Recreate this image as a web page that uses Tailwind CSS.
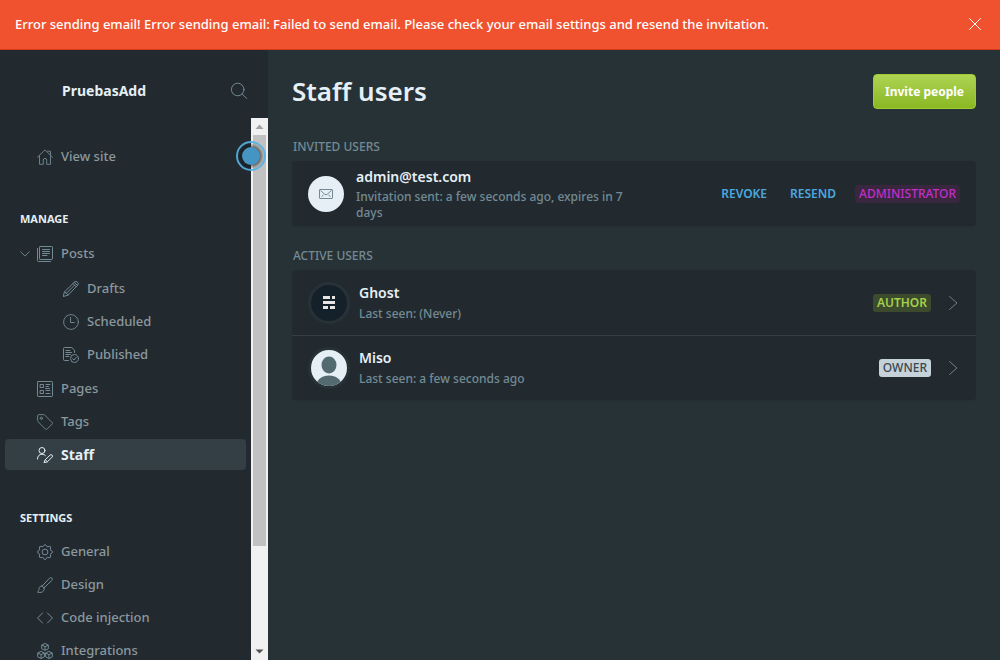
<!DOCTYPE html>
<html lang="en">
<head>
<meta charset="utf-8">
<meta name="viewport" content="width=device-width, initial-scale=1">
<title>Staff users - PruebasAdd</title>
<script src="https://cdn.jsdelivr.net/npm/@tailwindcss/browser@4"></script>
</head>
<body class="flex h-screen flex-col overflow-hidden bg-[#273237] font-['Noto_Sans','Open_Sans',sans-serif] text-[13px] text-[#8b989e]">

<aside role="alert" class="flex h-[50px] shrink-0 items-center justify-between border-b border-[#d4371a] bg-[#f05230] pr-[18px] pl-[15px] text-white">
  <p class="text-[13px] font-medium">Error sending email! Error sending email: Failed to send email. Please check your email settings and resend the invitation.</p>
  <button type="button" aria-label="Close" class="mb-px">
    <svg class="size-[14px]" viewBox="0 0 14 14" fill="none" stroke="currentColor" stroke-linecap="round"><path d="M1.5 1.5l11 11M12.5 1.5l-11 11"/></svg>
  </button>
</aside>

<div class="flex min-h-0 flex-1">
  <nav aria-label="Main" class="relative flex w-[268px] shrink-0 flex-col bg-[#222a30] font-medium">
    <header class="flex h-[68px] shrink-0 items-center justify-between pt-3 pr-5 pl-[62px]">
      <span class="text-[14px] font-bold text-[#e5eff5]">PruebasAdd</span>
      <button type="button" aria-label="Search" class="pt-0.5 text-[#738a94]">
        <svg class="size-[18px]" viewBox="0 0 18 18" fill="none" stroke="currentColor" stroke-linecap="round"><circle cx="7.7" cy="7.5" r="6.3"/><path d="M12.2 12l4.5 4.5"/></svg>
      </button>
    </header>

    <div class="flex min-h-0 flex-1">
      <div class="min-w-0 flex-1 overflow-hidden px-[5px] pt-[23px]">
        <a href="#site" class="flex h-[31px] items-center gap-2 pl-8">
          <svg class="size-4 text-[#738a94]" viewBox="0 0 16 16" fill="none" stroke="currentColor" stroke-width="0.9" stroke-linecap="round" stroke-linejoin="round"><path d="M.5 8.2L8 .9l7.500 7.300M2.500 7v8.300h3.800v-4.200a1.700 1.700 0 0 1 3.400 0v4.200h3.800V7M10.700 2.200h2.800v3.400"/></svg>
          View site</a>

        <h2 class="mt-[37px] h-5 pl-[15px] text-[11px] leading-5 font-bold text-[#e5eff5]">MANAGE</h2>
        <ul class="mt-[9px]">
          <li>
            <div class="flex h-[31px] items-center pl-[15px]">
              <button type="button" aria-label="Collapse posts" class="mr-[7px] text-[#738a94]"><svg class="h-[6px] w-[10px]" viewBox="0 0 10 6" fill="none" stroke="currentColor" stroke-width="0.9" stroke-linecap="round" stroke-linejoin="round"><path d="M.7.7L5 5.100 9.300.7"/></svg></button>
              <a href="#posts" class="flex items-center gap-2">
                <svg class="size-4 text-[#738a94]" viewBox="0 0 16 16" fill="none" stroke="currentColor" stroke-linecap="round" stroke-linejoin="round"><rect x="2.500" y=".5" width="13" height="13" rx=".7"/><path d="M.5 2.500v12a1 1 0 0 0 1 1h12M5.500 3.500h7M5.500 5.500h7M5.500 7.500h7M5.500 9.500h4.500"/></svg>
                Posts</a>
            </div>
            <ul class="mt-1 flex flex-col gap-0.5">
              <li><a href="#drafts" class="flex h-[31px] items-center gap-2 pl-[58px]">
                <svg class="size-4 text-[#738a94]" viewBox="0 0 16 16" fill="none" stroke="currentColor" stroke-linecap="round" stroke-linejoin="round"><path d="M1.700 10.700L11.300 1.200a2.200 2.200 0 0 1 3.200 0 2.200 2.200 0 0 1 0 3.200L5.200 14 .5 15.500zM1.700 10.700L5.200 14M10 2.500L13.300 5.800M11.200 1.300l3.300 3.200M3.500 12.200l8-8"/></svg>
                Drafts</a></li>
              <li><a href="#scheduled" class="flex h-[31px] items-center gap-2 pl-[58px]">
                <svg class="size-4 text-[#738a94]" viewBox="0 0 16 16" fill="none" stroke="currentColor" stroke-width="0.9" stroke-linecap="round" stroke-linejoin="round"><circle cx="8" cy="8" r="7.400"/><path d="M7.500 3.500v5h3.800"/></svg>
                Scheduled</a></li>
              <li><a href="#published" class="flex h-[31px] items-center gap-2 pl-[58px]">
                <svg class="size-4 text-[#738a94]" viewBox="0 0 16 16" fill="none" stroke="currentColor" stroke-linecap="round" stroke-linejoin="round"><path d="M5.500 13.500h-4a1 1 0 0 1-1-1v-11a1 1 0 0 1 1-1H8.800l2.700 2.700v2.300M2.800 3.500h4M2.800 5.500h5.700M2.800 7.500h4.500M2.800 9.500h3"/><circle cx="11.500" cy="11.500" r="4"/><path d="M9.700 11.700l1.300 1.300 2.300-2.800"/></svg>
                Published</a></li>
            </ul>
          </li>
        </ul>
        <ul class="mt-[3px] flex flex-col gap-0.5">
          <li><a href="#pages" class="flex h-[31px] items-center gap-2 pl-8">
            <svg class="size-4 text-[#738a94]" viewBox="0 0 16 16" fill="none" stroke="currentColor" stroke-linecap="round" stroke-linejoin="round"><rect x=".5" y=".5" width="15" height="15" rx=".7"/><path d="M3.500 3.500h3v3h-3zM3.500 9.500h3v3h-3zM9 3.500h4M9 5.500h2.500M9 9.500h4M9 12.500h4M8.500 7.500h4"/></svg>
            Pages</a></li>
          <li><a href="#tags" class="flex h-[31px] items-center gap-2 pl-8">
            <svg class="size-4 text-[#738a94]" viewBox="0 0 16 16" fill="none" stroke="currentColor" stroke-width="0.9" stroke-linecap="round" stroke-linejoin="round"><path d="M.6 1.600a1 1 0 0 1 1-1h5.200a1 1 0 0 1 .7.300l7.700 7.700a1 1 0 0 1 0 1.400l-5.200 5.200a1 1 0 0 1-1.400 0L.9 7.500a1 1 0 0 1-.3-.7z"/><circle cx="4.300" cy="4.300" r="1.100"/></svg>
            Tags</a></li>
          <li><a href="#staff" aria-current="page" class="flex h-[31px] items-center gap-2 rounded-[4px] bg-[#343f45] pl-8 text-[14px] font-bold text-[#e5eff5]">
            <svg class="size-4" viewBox="0 0 16 16" fill="none" stroke="currentColor" stroke-linecap="round" stroke-linejoin="round"><circle cx="5" cy="3.500" r="3"/><path d="M.5 12c0-3 1.800-4.800 4.500-4.800 1.500 0 2.600.5 3.400 1.400M8.300 12.700l4.800-4.600a1.400 1.400 0 0 1 2 0 1.400 1.400 0 0 1 0 2l-4.700 4.700-3 .8zM8.300 12.700l2.100 2.100"/></svg>
            Staff</a></li>
        </ul>

        <h2 class="mt-[38px] h-5 pl-[15px] text-[11px] leading-5 font-bold text-[#e5eff5]">SETTINGS</h2>
        <ul class="mt-2 flex flex-col gap-0.5">
          <li><a href="#general" class="flex h-[31px] items-center gap-2 pl-8">
            <svg class="size-4 text-[#738a94]" viewBox="0 0 16 16" fill="none" stroke="currentColor" stroke-linejoin="round"><path d="M6.600 1.500Q8-.2 9.400 1.500L9.900 2.600 11 2.900 12.200 2.300Q14 2.200 13.700 4L13.200 5.100 13.700 6.300 14.800 6.700Q16.200 8 14.800 9.300L13.700 9.700 13.200 10.900 13.700 12Q14 13.900 12 13.700L10.900 13.200 9.700 13.700 9.300 14.800Q8 16.200 6.700 14.800L6.300 13.700 5.100 13.200 4 13.700Q2 13.900 2.300 12L2.800 10.900 2.300 9.700 1.200 9.300Q-.2 8 1.200 6.700L2.300 6.300 2.800 5.100 2.300 4Q2 2.200 4 2.300L5.100 2.800 6.200 2.400Z"/><circle cx="8" cy="8" r="2.900"/></svg>
            General</a></li>
          <li><a href="#design" class="flex h-[31px] items-center gap-2 pl-8">
            <svg class="size-4 text-[#738a94]" viewBox="0 0 16 16" fill="none" stroke="currentColor" stroke-linecap="round" stroke-linejoin="round"><path d="M5.200 9L12.600 1.100a1.600 1.600 0 0 1 2.300 0 1.600 1.600 0 0 1 0 2.300L7 10.900M5.200 9L7 10.900M5.200 9c-1.600-.2-2.900.7-3.100 2.300-.2 1.800-.5 2.900-1.600 3.900 2.300.7 5.100.2 6.100-1.400.7-1 .8-2 .4-2.900"/></svg>
            Design</a></li>
          <li><a href="#code" class="flex h-[31px] items-center gap-2 pl-8">
            <svg class="size-4 text-[#738a94]" viewBox="0 0 16 16" fill="none" stroke="currentColor" stroke-linecap="round" stroke-linejoin="round"><path d="M5.500 3L.6 8l4.900 5M10.500 3l4.900 5-4.900 5"/></svg>
            Code injection</a></li>
          <li><a href="#integrations" class="flex h-[31px] items-center gap-2 pl-8">
            <svg class="size-4 text-[#738a94]" viewBox="0 0 16 16" fill="none" stroke="currentColor" stroke-linejoin="round"><path d="M8 .5l3.300 1.600v3.700L8 7.400 4.700 5.800V2.100zM4.700 2.100L8 3.700l3.300-1.600M8 3.700v3.700M4.100 8.400l3.300 1.600v3.800l-3.300 1.700L.7 13.800V10zM.7 10l3.400 1.600L7.400 10M4.100 11.600v3.900M11.900 8.400l3.400 1.600v3.800l-3.400 1.700-3.300-1.700V10zM8.600 10l3.300 1.600 3.400-1.600M11.900 11.600v3.900"/></svg>
            Integrations</a></li>
        </ul>
      </div>

      <div aria-hidden="true" class="flex w-[17px] shrink-0 flex-col items-center bg-[#f1f1f1]">
        <svg class="size-[17px] shrink-0" viewBox="0 0 17 17" fill="#a3a3a3"><path d="M8.500 6.500L12.500 11h-8z"/></svg>
        <div class="flex w-full flex-1 flex-col px-0.5"><div class="h-[81%] bg-[#c1c1c1]"></div></div>
        <svg class="size-[17px] shrink-0" viewBox="0 0 17 17" fill="#505050"><path d="M8.500 10.500L4.500 6.500h8z"/></svg>
      </div>
    </div>
    <button type="button" aria-label="Show hint" class="absolute top-[91px] right-0.5 grid size-[30px] place-items-center rounded-full border-2 border-[#55b1e4]/90 bg-[radial-gradient(circle,rgba(20,20,20,0.6)_45%,rgba(20,20,20,0.05)_70%)]"><span class="size-[18px] rounded-full bg-[#4595c3]"></span></button>
  </nav>

  <main class="min-w-0 flex-1 px-6 pt-6">
    <header class="flex h-[35px] items-center justify-between">
      <h1 class="text-[26px] font-semibold text-[#e5eff5]">Staff users</h1>
      <button type="button" class="h-[35px] rounded-[4px] border border-[#9fcb33] bg-linear-to-b from-[#aed451] to-[#8bb722] px-[11px] text-[12px] font-bold text-white">Invite people</button>
    </header>

    <section class="mt-7">
      <h2 class="pl-px text-[12px] leading-5 font-medium text-[#738a94]">INVITED USERS</h2>
      <article class="mt-1 flex h-[65px] items-center justify-between rounded-[4px] bg-[#222a30] px-4 shadow-xs">
        <div class="flex items-center gap-3">
          <span class="grid size-9 shrink-0 place-items-center rounded-full bg-[#e5eff5] text-[#738a94]">
            <svg class="h-[10px] w-[14px]" viewBox="0 0 14 10" fill="none" stroke="currentColor" stroke-linejoin="round"><rect x=".5" y=".5" width="13" height="9" rx=".5"/><path d="M1.500 1.500l4.300 3.800a1.800 1.800 0 0 0 2.400 0l4.300-3.800M2.500 7.500l2-1.500M11.500 7.500l-2-1.500"/></svg>
          </span>
          <div class="w-[290px]">
            <h3 class="text-[14px] leading-5 font-semibold text-[#e5eff5]">admin@test.com</h3>
            <p class="pt-0.5 text-[12px] leading-4 font-medium text-[#738a94]">Invitation sent: a few seconds ago, expires in 7 days</p>
          </div>
        </div>
        <div class="flex items-center text-[12px] font-semibold">
          <button type="button" class="mr-[23px] text-[#4ba8df]">REVOKE</button>
          <button type="button" class="mr-[19px] text-[#4ba8df]">RESEND</button>
          <span class="rounded-[3px] bg-[#38273e] px-1 leading-[18px] font-medium text-[#c02fc9]">ADMINISTRATOR</span>
        </div>
      </article>
    </section>

    <section class="mt-5">
      <h2 class="pl-px text-[12px] leading-5 font-medium text-[#738a94]">ACTIVE USERS</h2>
      <div class="mt-1 rounded-[4px] bg-[#222a30] shadow-xs">
        <a href="#ghost" class="flex h-[66px] items-center justify-between border-b border-[#343f45] px-4">
          <div class="flex items-center gap-[9px]">
            <span class="grid size-[42px] place-items-center rounded-full border-3 border-[#273237] bg-[#15212a]">
              <svg class="h-[13px] w-[12px]" viewBox="0 0 12 13" fill="#e8e4e3"><path d="M0 0h7v3H0zM9 0h3v3H9zM0 5h12v3H0zM0 10h5v3H0zM7 10h5v3H7z"/></svg>
            </span>
            <div>
              <h3 class="text-[14px] leading-5 font-semibold text-[#e5eff5]">Ghost</h3>
              <p class="pt-0.5 text-[12px] leading-[18px] font-medium text-[#738a94]">Last seen: (Never)</p>
            </div>
          </div>
          <div class="flex items-center gap-[17px]">
            <span class="rounded-[3px] bg-[#3c4b2e] px-1 text-[12px] leading-[18px] font-semibold text-[#a4d04a]">AUTHOR</span>
            <svg class="h-4 w-3 text-[#738a94]" viewBox="0 0 12 16" fill="none" stroke="currentColor" stroke-width="0.9" stroke-linecap="round" stroke-linejoin="round"><path d="M1.500 1.500L9 8l-7.500 6.500"/></svg>
          </div>
        </a>
        <a href="#miso" class="flex h-16 items-center justify-between px-4">
          <div class="flex items-center gap-[9px]">
            <span class="size-[42px] overflow-hidden rounded-full border-3 border-[#273237] bg-[#e5eff5]">
              <svg class="size-9" viewBox="0 0 36 36" fill="#546a71"><ellipse cx="18" cy="15" rx="7.500" ry="8.500"/><path d="M5 36C6 29 11 25.500 18 25.500S30 29 31 36z"/></svg>
            </span>
            <div>
              <h3 class="text-[14px] leading-5 font-semibold text-[#e5eff5]">Miso</h3>
              <p class="pt-0.5 text-[12px] leading-[18px] font-medium text-[#738a94]">Last seen: a few seconds ago</p>
            </div>
          </div>
          <div class="flex items-center gap-[17px]">
            <span class="rounded-[3px] bg-[#c5d2d9] px-1 text-[12px] leading-[18px] font-medium text-[#3c484e]">OWNER</span>
            <svg class="h-4 w-3 text-[#738a94]" viewBox="0 0 12 16" fill="none" stroke="currentColor" stroke-width="0.9" stroke-linecap="round" stroke-linejoin="round"><path d="M1.500 1.500L9 8l-7.500 6.500"/></svg>
          </div>
        </a>
      </div>
    </section>
  </main>
</div>
</body>
</html>
